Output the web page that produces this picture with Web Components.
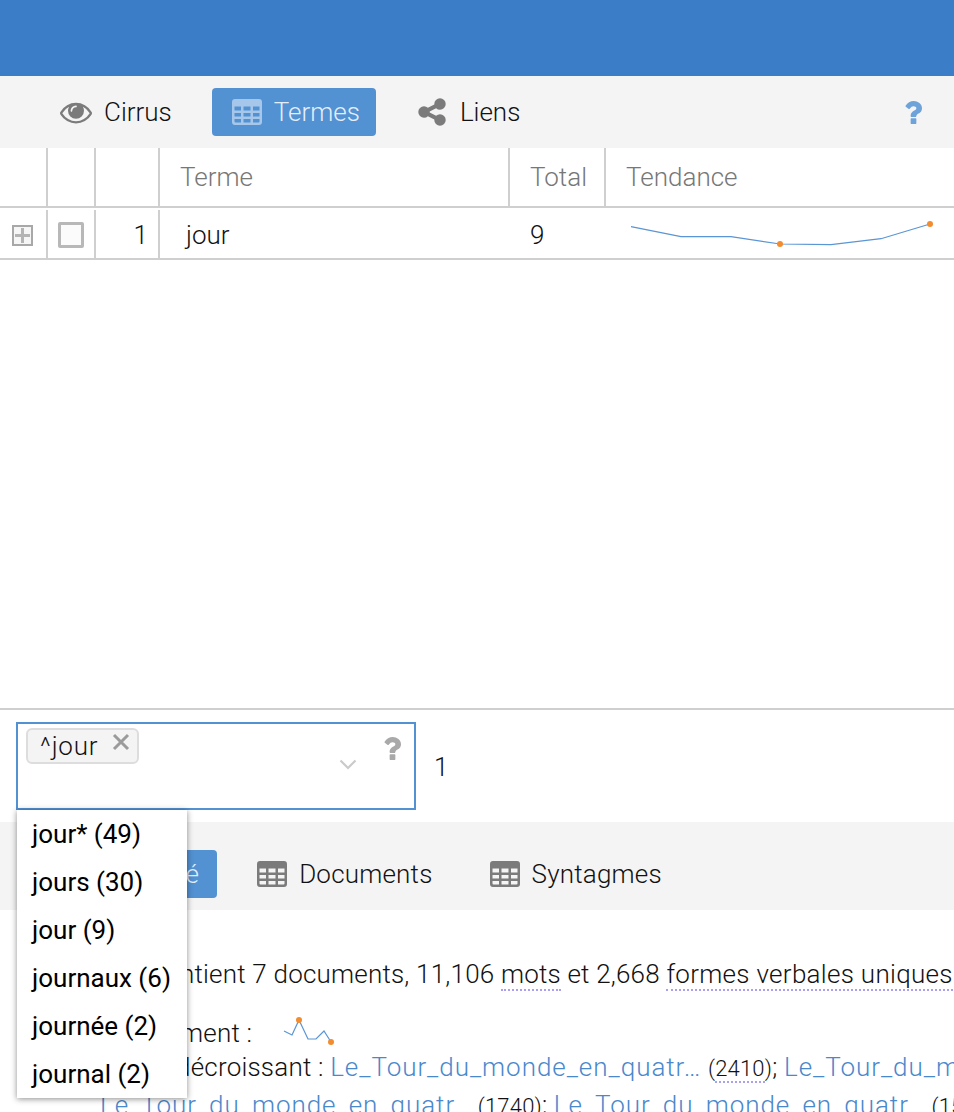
<!DOCTYPE html>
<html lang="fr">
<head>
<meta charset="utf-8">
<title>Voyant</title>
<style>
    html, body { margin: 0; height: 1112px; overflow: hidden; background: #fff; }
    body { font-family: Roboto, "Liberation Sans", sans-serif; font-weight: 300; font-size: 26px; color: #111; }
</style>
</head>
<body>
<voyant-app></voyant-app>
<script>
const ICONS = {
    eye: `<svg viewBox="0 0 1792 1792" width="32" height="32"><path fill="currentColor" d="M1664 960q-152-236-381-353 61 104 61 225 0 185-131.500 316.500t-316.500 131.500-316.500-131.500-131.500-316.500q0-121 61-225-229 117-381 353 133 205 333.500 326.500t434.500 121.500 434.500-121.500 333.500-326.500zm-720-384q0-20-14-34t-34-14q-125 0-214.500 89.500t-89.500 214.500q0 20 14 34t34 14 34-14 14-34q0-86 61-147t147-61q20 0 34-14t14-34zm848 384q0 34-20 69-140 230-376.500 368.500t-499.500 138.500-499.500-139-376.500-368q-20-35-20-69t20-69q140-229 376.500-368t499.500-139 499.500 139 376.500 368q20 35 20 69z"/></svg>`,
    share: `<svg viewBox="0 0 1792 1792" width="32" height="32"><path fill="currentColor" d="M1344 1024q133 0 226.500 93.500t93.500 226.500-93.500 226.500-226.500 93.500-226.500-93.500-93.500-226.500q0-12 2-34l-360-180q-92 86-218 86-133 0-226.500-93.500t-93.500-226.500 93.500-226.500 226.500-93.500q126 0 218 86l360-180q-2-22-2-34 0-133 93.500-226.500t226.500-93.500 226.500 93.500 93.500 226.500-93.500 226.500-226.500 93.500q-126 0-218-86l-360 180q2 22 2 34t-2 34l360 180q92-86 218-86z"/></svg>`,
    table: `<svg viewBox="0 0 30 26" width="30" height="26"><path fill="currentColor" fill-rule="evenodd" d="M3 0h24a3 3 0 0 1 3 3v20a3 3 0 0 1-3 3H3a3 3 0 0 1-3-3V3a3 3 0 0 1 3-3zM2.500 7.500v4h6.500v-4zm9 0v4h7v-4zm9.500 0v4h6.500v-4zM2.500 14v3.500h6.500V14zm9 0v3.500h7V14zm9.500 0v3.500h6.500V14zM2.500 20v2.500q0 1 1 1H9V20zm9 0v3.500h7V20zm9.500 0v3.500h5.500q1 0 1-1V20z"/></svg>`,
    help: `<svg viewBox="396 256 1008 1280" width="18" height="23" preserveAspectRatio="none"><path fill="currentColor" d="M1088 1256v240q0 16-12 28t-28 12h-240q-16 0-28-12t-12-28v-240q0-16 12-28t28-12h240q16 0 28 12t12 28zm316-600q0 54-15.500 101t-35 76.500-55 59.500-57.500 43.500-61 35.500q-41 23-68.500 65t-27.500 67q0 17-12 32.500t-28 15.500h-240q-15 0-25.500-18.500t-10.500-37.500v-45q0-83 65-156.500t143-108.500q59-27 84-56t25-76q0-42-46.500-74t-107.500-32q-65 0-108 29-35 25-107 115-13 16-31 16-12 0-25-8l-164-125q-13-10-15.500-25t5.500-28q160-266 464-266 80 0 161 31t146 83 106 127.500 41 158.500z"/></svg>`
};

class ToolTab extends HTMLElement {
    connectedCallback() {
        const icon = ICONS[this.getAttribute('icon')] || '';
        this.attachShadow({ mode: 'open' }).innerHTML = `
        <style>
            :host { display: flex; align-items: center; height: 48px; padding: 0 var(--pad, 18px) 0 20px; gap: 12px;
                    border-radius: 4px; color: #111; white-space: nowrap; }
            :host([active]) { background: #5291d2; color: #e4eefa; }
            .icon { display: flex; color: #7b7b7b; }
            :host([active]) .icon { color: #a6c7ea; }
        </style>
        <span class="icon">${icon}</span><slot></slot>`;
    }
}
customElements.define('tool-tab', ToolTab);

class ToolBar extends HTMLElement {
    connectedCallback() {
        this.attachShadow({ mode: 'open' }).innerHTML = `
        <style>
            :host { display: flex; align-items: flex-end; background: #f4f4f4; gap: 20px;
                    padding: 0 0 12px var(--left, 40px); box-sizing: border-box; height: var(--h, 72px); }
            ::slotted([slot=end]) { margin: 0 32px 12px auto; display: flex; color: #6ea3da; }
        </style>
        <slot></slot><slot name="end"></slot>`;
    }
}
customElements.define('tool-bar', ToolBar);

class TermGrid extends HTMLElement {
    connectedCallback() {
        this.attachShadow({ mode: 'open' }).innerHTML = `
        <style>
            :host { display: block; flex: 1; --line: #cfcfcf; }
            .row { display: grid; grid-template-columns: 48px 48px 64px 350px 96px 1fr; }
            .head { height: 60px; border-bottom: 2px solid var(--line); box-sizing: border-box; color: #777; }
            .head > div { display: flex; align-items: center; padding-left: 20px; border-right: 2px solid var(--line); box-sizing: border-box; }
            .head > div:last-child { border-right: 0; }
            .body { height: 52px; padding-top: 2px; border-bottom: 2px solid var(--line); box-sizing: border-box; }
            .body > div { display: flex; align-items: center; box-sizing: border-box; height: 48px; }
            .body .cell { padding-top: 2px; }
            .body .rule { border-right: 2px solid var(--line); }
            .expander { width: 21px; height: 21px; margin-left: 12px; box-sizing: border-box; border: 2px solid #a8a8a8;
                        background: #f6f6f6; position: relative; }
            .expander::before, .expander::after { content: ""; position: absolute; background: #b4b4b4; }
            .expander::before { left: 1px; right: 1px; top: 7px; height: 3px; }
            .expander::after { top: 1px; bottom: 1px; left: 7px; width: 3px; }
            .check { width: 26px; height: 26px; margin-left: 10px; box-sizing: border-box; border: 3px solid #b8b8b8; border-radius: 2px; background: #fbfbfb; }
            .num { justify-content: flex-end; padding-right: 10px; }
            .term { padding-left: 26px; }
            .total { padding-left: 20px; }
        </style>
        <div class="row head">
            <div></div><div></div><div></div><div>Terme</div><div>Total</div><div>Tendance</div>
        </div>
        <div class="row body">
            <div class="cell rule"><span class="expander"></span></div>
            <div class="cell rule"><span class="check"></span></div>
            <div class="cell rule num">1</div>
            <div class="cell term">jour</div>
            <div class="cell total">9</div>
            <div><spark-line points="25,16.700 75,26.700 125,26.700 174,34 225,34.700 275,28.700 324,14" dots="174,34 324,14" width="340" height="48"></spark-line></div>
        </div>`;
    }
}
customElements.define('term-grid', TermGrid);

class SparkLine extends HTMLElement {
    connectedCallback() {
        const w = this.getAttribute('width'), h = this.getAttribute('height');
        const dots = (this.getAttribute('dots') || '').split(' ').map(d => {
            const [x, y] = d.split(',');
            return `<circle cx="${x}" cy="${y}" r="3" fill="#f28c2e"/>`;
        }).join('');
        this.attachShadow({ mode: 'open' }).innerHTML = `
        <style>:host { display: inline-block; line-height: 0; } svg { display: block; overflow: visible; }</style>
        <svg width="${w}" height="${h}"><polyline points="${this.getAttribute('points')}" fill="none" stroke="#5a95d5" stroke-width="1.200"/>${dots}</svg>`;
    }
}
customElements.define('spark-line', SparkLine);

class TermTag extends HTMLElement {
    connectedCallback() {
        this.attachShadow({ mode: 'open' }).innerHTML = `
        <style>
            :host { display: inline-flex; align-items: center; box-sizing: border-box; height: 36px; padding: 0 7px 0 12px; gap: 14px;
                    background: #f4f4f4; border: 2px solid #ddd; border-radius: 6px; letter-spacing: .8px; }
            svg { display: block; margin-top: -8px; }
        </style>
        <slot></slot>
        <svg width="18" height="18" viewBox="0 0 18 18"><path d="M2 2l14 14M16 2L2 16" stroke="#9b9b9b" stroke-width="3" fill="none"/></svg>`;
    }
}
customElements.define('term-tag', TermTag);

class SearchField extends HTMLElement {
    connectedCallback() {
        this.attachShadow({ mode: 'open' }).innerHTML = `
        <style>
            :host { display: flex; box-sizing: border-box; width: 400px; height: 88px; border: 2px solid #5291d2;
                    padding: 4px 13px 0 8px; background: #fff; }
            .tags { flex: 1; }
            .arrow { margin: 31px 26px 0 0; }
            .help { margin-top: 9px; color: #a9a9a9; display: flex; height: 23px; }
            svg { display: block; }
        </style>
        <div class="tags"><slot></slot></div>
        <svg class="arrow" width="18" height="11" viewBox="0 0 18 11"><path d="M1.500 1.500L9 9l7.500-7.500" stroke="#cbcbcb" stroke-width="2.200" fill="none"/></svg>
        <div class="help">${ICONS.help}</div>`;
    }
}
customElements.define('search-field', SearchField);

class DropList extends HTMLElement {
    connectedCallback() {
        this.attachShadow({ mode: 'open' }).innerHTML = `
        <style>
            :host { position: absolute; left: 17px; top: 810px; width: 170px; height: 288px; background: #fff; z-index: 5;
                    box-shadow: 0 1px 6px rgba(0,0,0,.45); font-weight: 400; color: #000; }
            ::slotted(div) { height: 48px; line-height: 48px; padding-left: 15px; white-space: nowrap; }
        </style>
        <slot></slot>`;
    }
}
customElements.define('drop-list', DropList);

class SummaryPanel extends HTMLElement {
    connectedCallback() {
        this.attachShadow({ mode: 'open' }).innerHTML = `
        <style>
            :host { display: block; height: 202px; overflow: hidden; white-space: nowrap; line-height: 36px; padding-top: 46px; box-sizing: border-box; letter-spacing: .2px; }
            .dot { border-bottom: 2px dotted #a9a0f0; }
            .wide { letter-spacing: .3px; padding-right: 4px; }
            .num { font-size: 22px; }
            a { color: #4a88cc; text-decoration: none; letter-spacing: .95px; }
            p { margin: 0; }
            .lead { padding-left: 28px; }
            .doc { padding-left: 120px; margin-top: 23px; display: flex; align-items: center; height: 36px; }
            .doc spark-line { margin: -2px 0 0 31px; }
            .list { padding-left: 100px; margin-top: -2px; }
            .list p:first-child { text-indent: 6px; }
        </style>
        <p class="lead">Ce corpus contient 7 documents, 11,106 <span class="dot">mots</span> et 2,668 <span class="dot wide">formes verbales uniques</span></p>
        <p class="doc">Document :<spark-line points="1,11 9,15 16,0 25,19 33,19 41,11 48,22" dots="16,0 48,22" width="50" height="24"></spark-line></p>
        <div class="list">
            <p>Ordre décroissant : <a>Le_Tour_du_monde_en_quatr…</a> <span class="num">(<span class="dot">2410</span>)</span>; <a>Le_Tour_du_monde_en_quatr…</a></p>
            <p><a>Le_Tour_du_monde_en_quatr…</a> <span class="num">(1740)</span>; <a>Le_Tour_du_monde_en_quatr…</a> <span class="num">(1590)</span></p>
        </div>`;
    }
}
customElements.define('summary-panel', SummaryPanel);

class VoyantApp extends HTMLElement {
    connectedCallback() {
        this.attachShadow({ mode: 'open' }).innerHTML = `
        <style>
            :host { display: flex; flex-direction: column; height: 1112px; position: relative; overflow: hidden; }
            .top { height: 76px; background: #3b7dc6; }
            .search { height: 114px; border-top: 2px solid #cfcfcf; box-sizing: border-box; display: flex; align-items: flex-start;
                      padding: 12px 0 0 16px; gap: 18px; }
            .count { line-height: 90px; }
            .low { --h: 88px; --left: 42px; letter-spacing: .2px; }
        </style>
        <div class="top"></div>
        <tool-bar>
            <tool-tab icon="eye" style="--pad:20px">Cirrus</tool-tab>
            <tool-tab icon="table" active style="--pad:16px">Termes</tool-tab>
            <tool-tab icon="share">Liens</tool-tab>
            <span slot="end">${ICONS.help}</span>
        </tool-bar>
        <term-grid></term-grid>
        <div class="search">
            <search-field><term-tag>^jour</term-tag></search-field>
            <span class="count">1</span>
        </div>
        <drop-list>
            <div>jour* (49)</div><div>jours (30)</div><div>jour (9)</div>
            <div>journaux (6)</div><div>journée (2)</div><div>journal (2)</div>
        </drop-list>
        <tool-bar class="low">
            <tool-tab icon="table" active>Résumé</tool-tab>
            <tool-tab icon="table" style="--pad:17px">Documents</tool-tab>
            <tool-tab icon="table">Syntagmes</tool-tab>
        </tool-bar>
        <summary-panel></summary-panel>`;
    }
}
customElements.define('voyant-app', VoyantApp);
</script>
</body>
</html>
